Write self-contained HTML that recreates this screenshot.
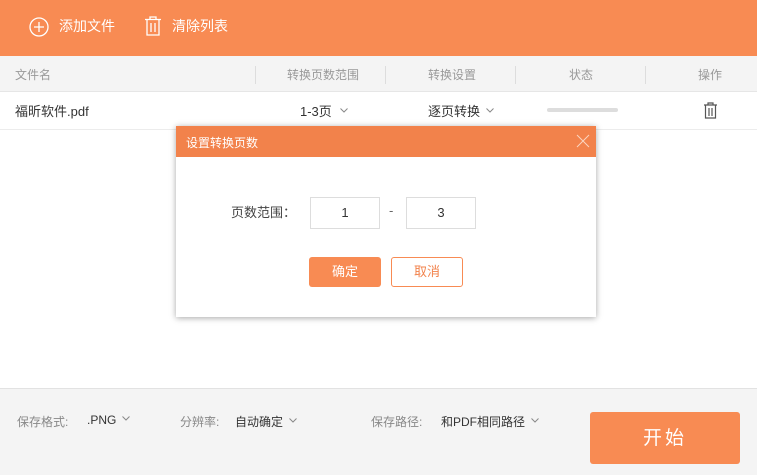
<!DOCTYPE html>
<html><head><meta charset="utf-8"><style>
*{margin:0;padding:0;box-sizing:border-box}
body{width:757px;height:475px;position:relative;overflow:hidden;background:#fff;font-family:"Liberation Sans","Noto Sans CJK SC",sans-serif;font-size:13px;color:#333}
.a{position:absolute;white-space:nowrap}
.hdr{left:0;top:0;width:757px;height:56px;background:#f88b53}
.th{left:0;top:56px;width:757px;height:36px;background:#f4f4f4;border-bottom:1px solid #e6e6e6}
.thc{color:#999;font-size:12px;top:66px}
.sep{width:1px;height:18px;background:#ddd;top:66px}
.row{left:0;top:92px;width:757px;height:38px;border-bottom:1px solid #ececec}
.ft{left:0;top:388px;width:757px;height:87px;background:#f4f4f4;border-top:1px solid #e2e2e2}
.lbl{color:#888;font-size:12px;top:413px}
.val{color:#333;font-size:12px;top:413px}
.chev{display:inline-block;width:8px;height:5px;margin-left:4px;vertical-align:middle;position:relative;top:-2px}
</style></head><body>
<svg width="0" height="0" style="position:absolute"><symbol id="cv" viewBox="0 0 8 5"><path d="M.5.5L4 4 7.5.5" fill="none" stroke="#888" stroke-width="1"/></symbol></svg>
<div class="a hdr"></div>
<svg class="a" style="left:29px;top:17px" width="20" height="20" viewBox="0 0 20 20"><circle cx="10" cy="10" r="9" fill="none" stroke="#fff" stroke-width="1.3"/><path d="M10 5v10M5 10h10" stroke="#fff" stroke-width="1.3"/></svg>
<div class="a" style="left:59px;top:16px;color:#fff;font-size:14px">添加文件</div>
<svg class="a" style="left:144px;top:16px" width="18" height="20" viewBox="0 0 18 20"><path d="M1 3.5h16M6 3.5V1h6v2.5M3 3.5V19h12V3.5M7 7v9M11 7v9" fill="none" stroke="#fff" stroke-width="1.3"/></svg>
<div class="a" style="left:172px;top:16px;color:#fff;font-size:14px">清除列表</div>

<div class="a th"></div>
<div class="a thc" style="left:15px">文件名</div>
<div class="a sep" style="left:255px"></div>
<div class="a thc" style="left:287px">转换页数范围</div>
<div class="a sep" style="left:385px"></div>
<div class="a thc" style="left:428px">转换设置</div>
<div class="a sep" style="left:515px"></div>
<div class="a thc" style="left:569px">状态</div>
<div class="a sep" style="left:645px"></div>
<div class="a thc" style="left:698px">操作</div>

<div class="a row"></div>
<div class="a" style="left:15px;top:101px">福昕软件.pdf</div>
<div class="a" style="left:300px;top:101px">1-3页<svg class="chev" style="margin-left:8px"><use href="#cv"/></svg></div>
<div class="a" style="left:428px;top:101px">逐页转换<svg class="chev" style="margin-left:6px"><use href="#cv"/></svg></div>
<div class="a" style="left:547px;top:108px;width:71px;height:4px;border-radius:2px;background:#ddd"></div>
<svg class="a" style="left:703px;top:102px" width="15" height="17" viewBox="0 0 15 17"><path d="M1 3h13M5 3V1h5v2M2.5 3v13h10V3M6 6v8M9 6v8" fill="none" stroke="#555" stroke-width="1.2"/></svg>

<div class="a" style="left:176px;top:126px;width:420px;height:191px;background:#fff;box-shadow:0 1px 6px rgba(0,0,0,.35)"></div>
<div class="a" style="left:176px;top:126px;width:420px;height:31px;background:#f2824b"></div>
<div class="a" style="left:186px;top:134px;color:#fff;font-size:12px">设置转换页数</div>
<svg class="a" style="left:576px;top:134px" width="14" height="14" viewBox="0 0 14 14"><path d="M1 1l12 12M13 1L1 13" stroke="#fbd5c0" stroke-width="1"/></svg>
<div class="a" style="left:231px;top:202px;font-size:13px;color:#444">页数范围：</div>
<div class="a" style="left:310px;top:197px;width:70px;height:32px;border:1px solid #ddd;text-align:center;line-height:30px;font-size:13px">1</div>
<div class="a" style="left:389px;top:203px;color:#666">-</div>
<div class="a" style="left:406px;top:197px;width:70px;height:32px;border:1px solid #ddd;text-align:center;line-height:30px;font-size:13px">3</div>
<div class="a" style="left:309px;top:257px;width:72px;height:30px;background:#f88b53;border-radius:3px;color:#fff;text-align:center;line-height:30px;font-size:13px">确定</div>
<div class="a" style="left:391px;top:257px;width:72px;height:30px;border:1px solid #f88b53;border-radius:3px;color:#f2824b;text-align:center;line-height:28px;font-size:13px">取消</div>

<div class="a ft"></div>
<div class="a lbl" style="left:17px">保存格式:</div>
<div class="a val" style="left:87px">.PNG<svg class="chev" style="margin-left:6px"><use href="#cv"/></svg></div>
<div class="a lbl" style="left:180px">分辨率:</div>
<div class="a val" style="left:235px">自动确定<svg class="chev" style="margin-left:6px"><use href="#cv"/></svg></div>
<div class="a lbl" style="left:371px">保存路径:</div>
<div class="a val" style="left:441px">和PDF相同路径<svg class="chev" style="margin-left:6px"><use href="#cv"/></svg></div>
<div class="a" style="left:590px;top:412px;width:150px;height:52px;background:#f88b53;border-radius:3px;color:#fff;text-align:center;line-height:54px;font-size:19px;letter-spacing:3px">开始</div>
</body></html>
